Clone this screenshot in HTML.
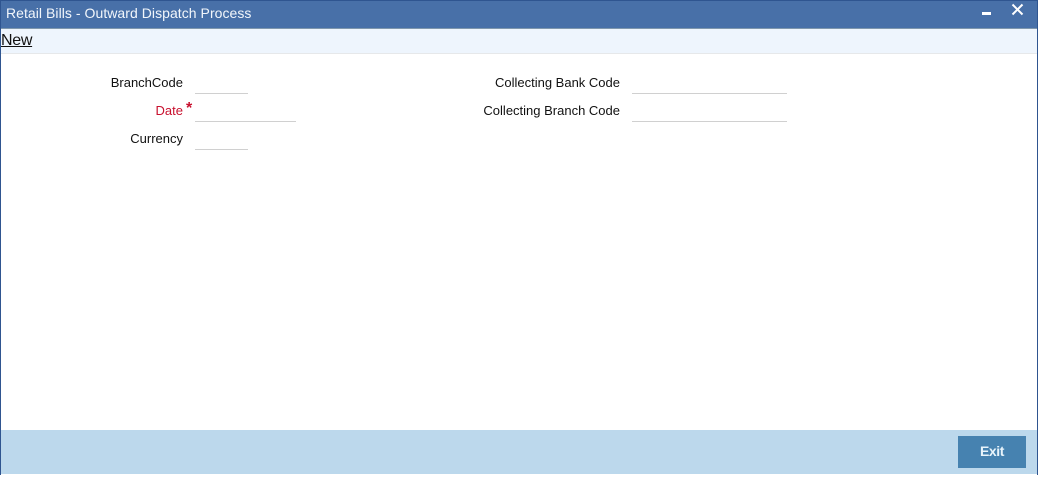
<!DOCTYPE html>
<html>
<head>
<meta charset="utf-8">
<style>
html,body{margin:0;padding:0;background:#fff;width:1038px;height:483px;overflow:hidden;font-family:"Liberation Sans",Arial,sans-serif}
.a{position:absolute}
.l{position:absolute;text-align:right;line-height:16px;color:#111;white-space:nowrap;font-size:13px}
.f{position:absolute;height:1px;background:#d0d0d0}
</style>
</head>
<body>
<div class="a" style="left:0;top:0;width:1038px;height:475px;background:#fff"></div>
<div class="a" style="left:0;top:0;width:1038px;height:28px;background:#4870a8"></div>
<div class="a" style="left:0;top:0;width:1038px;height:1px;background:#2f5590"></div>
<div class="a" style="left:0;top:28px;width:1038px;height:1px;background:#7f97ad"></div>
<div class="a" style="left:6px;top:5px;font-size:14px;letter-spacing:.05px;line-height:16px;color:#f2f6fb;white-space:nowrap">Retail Bills - Outward Dispatch Process</div>
<div class="a" style="left:982px;top:12px;width:9px;height:3px;background:#fff"></div>
<svg class="a" style="left:1011px;top:3px" width="13" height="13" viewBox="0 0 13 13"><path d="M1.5 1.5L11.5 11.5M11.5 1.5L1.5 11.5" stroke="#fff" stroke-width="2" fill="none"/></svg>
<div class="a" style="left:0;top:29px;width:1038px;height:24px;background:#eef5fd"></div>
<div class="a" style="left:0;top:53px;width:1038px;height:1px;background:#e6e8ea"></div>
<div class="a" style="left:1px;top:32px;font-size:16px;letter-spacing:-.3px;line-height:18px;color:#111;text-decoration:underline">New</div>

<div class="l" style="right:855px;top:75px">BranchCode</div>
<div class="l" style="right:855px;top:103px;color:#c8102e">Date</div>
<div class="a" style="left:186px;top:101px;font-size:16px;font-weight:bold;line-height:16px;color:#c8102e">*</div>
<div class="l" style="right:855px;top:131px">Currency</div>
<div class="f" style="left:195px;top:93px;width:53px"></div>
<div class="f" style="left:195px;top:121px;width:101px"></div>
<div class="f" style="left:195px;top:149px;width:53px"></div>

<div class="l" style="right:418px;top:75px">Collecting Bank Code</div>
<div class="l" style="right:418px;top:103px">Collecting Branch Code</div>
<div class="f" style="left:632px;top:93px;width:155px"></div>
<div class="f" style="left:632px;top:121px;width:155px"></div>

<div class="a" style="left:0;top:430px;width:1038px;height:44px;background:#bcd8ec"></div>
<div class="a" style="left:958px;top:436px;width:68px;height:32px;background:#4682b0;color:#e8f4fb;font-size:14px;letter-spacing:-.4px;font-weight:bold;line-height:31px;text-align:center">Exit</div>

<div class="a" style="left:0;top:0;width:1px;height:475px;background:#2f5590"></div>
<div class="a" style="left:1037px;top:0;width:1px;height:475px;background:#2f5590"></div>
</body>
</html>
